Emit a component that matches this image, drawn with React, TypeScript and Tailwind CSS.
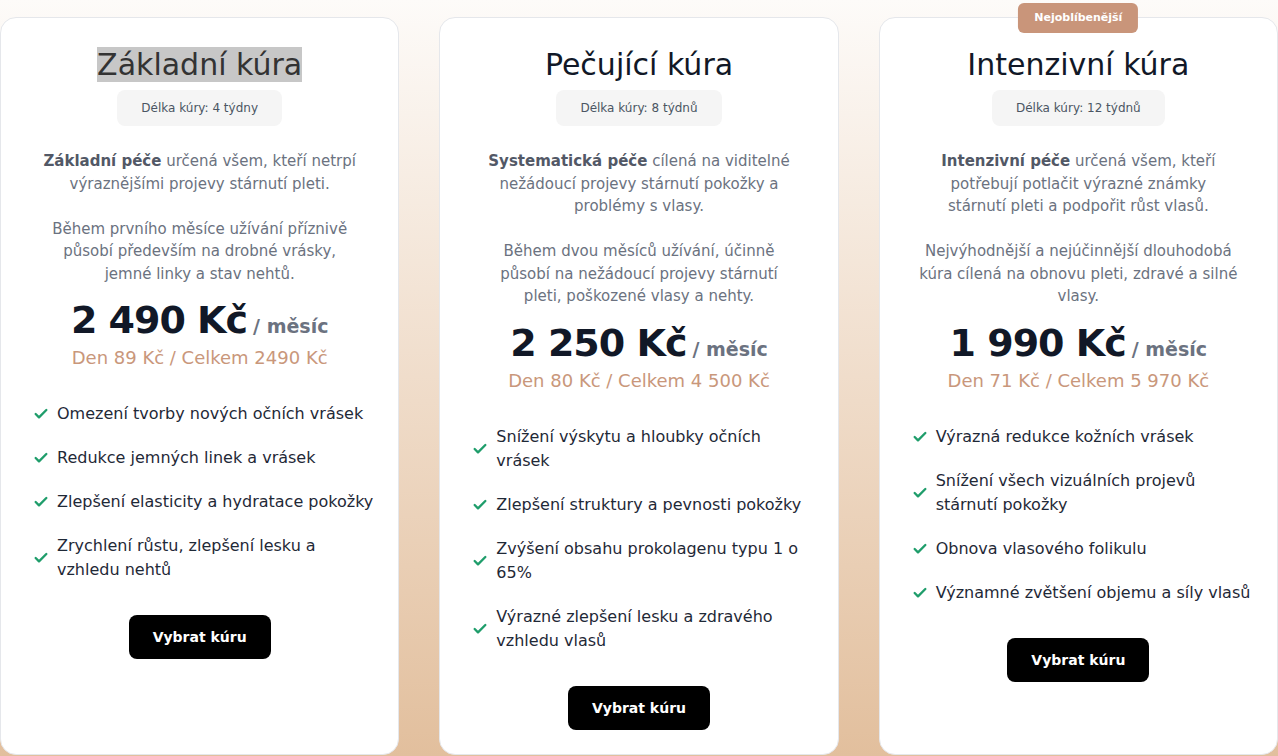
import { Check } from 'lucide-react';

type Plan = {
  title: string;
  duration: string;
  lead: string;
  intro: string[];
  body: string[];
  price: string;
  sub: string;
  features: string[][];
  badge?: string;
  selected?: boolean;
};

// line breaks follow the original layout
const plans: Plan[] = [
  {
    title: 'Základní kúra',
    duration: 'Délka kúry: 4 týdny',
    lead: 'Základní péče',
    intro: [' určená všem, kteří netrpí', 'výraznějšími projevy stárnutí pleti.'],
    body: ['Během prvního měsíce užívání příznivě', 'působí především na drobné vrásky,', 'jemné linky a stav nehtů.'],
    price: '2 490 Kč',
    sub: 'Den 89 Kč / Celkem 2490 Kč',
    features: [
      ['Omezení tvorby nových očních vrásek'],
      ['Redukce jemných linek a vrásek'],
      ['Zlepšení elasticity a hydratace pokožky'],
      ['Zrychlení růstu, zlepšení lesku a', 'vzhledu nehtů'],
    ],
    selected: true,
  },
  {
    title: 'Pečující kúra',
    duration: 'Délka kúry: 8 týdnů',
    lead: 'Systematická péče',
    intro: [' cílená na viditelné', 'nežádoucí projevy stárnutí pokožky a', 'problémy s vlasy.'],
    body: ['Během dvou měsíců užívání, účinně', 'působí na nežádoucí projevy stárnutí', 'pleti, poškozené vlasy a nehty.'],
    price: '2 250 Kč',
    sub: 'Den 80 Kč / Celkem 4 500 Kč',
    features: [
      ['Snížení výskytu a hloubky očních', 'vrásek'],
      ['Zlepšení struktury a pevnosti pokožky'],
      ['Zvýšení obsahu prokolagenu typu 1 o', '65%'],
      ['Výrazné zlepšení lesku a zdravého', 'vzhledu vlasů'],
    ],
  },
  {
    title: 'Intenzivní kúra',
    duration: 'Délka kúry: 12 týdnů',
    lead: 'Intenzivní péče',
    intro: [' určená všem, kteří', 'potřebují potlačit výrazné známky', 'stárnutí pleti a podpořit růst vlasů.'],
    body: ['Nejvýhodnější a nejúčinnější dlouhodobá', 'kúra cílená na obnovu pleti, zdravé a silné', 'vlasy.'],
    price: '1 990 Kč',
    sub: 'Den 71 Kč / Celkem 5 970 Kč',
    features: [
      ['Výrazná redukce kožních vrásek'],
      ['Snížení všech vizuálních projevů', 'stárnutí pokožky'],
      ['Obnova vlasového folikulu'],
      ['Významné zvětšení objemu a síly vlasů'],
    ],
    badge: 'Nejoblíbenější',
  },
];

const Lines = ({ lines }: { lines: string[] }) => (
  <>
    {lines.map((l, i) => (
      <span key={i}>
        {i > 0 && <br />}
        {l}
      </span>
    ))}
  </>
);

const PlanCard = ({ plan }: { plan: Plan }) => (
  <div className="relative flex flex-col items-center bg-white border border-[#e5e7eb] rounded-2xl px-8 pt-[29px] pb-6">
    {plan.badge && (
      <span className="absolute left-1/2 top-0 -translate-x-1/2 -translate-y-1/2 bg-[#c9957a] text-white text-[11px] font-semibold rounded-md px-4 h-[30px] flex items-center">
        {plan.badge}
      </span>
    )}
    <h2 className="text-[30px] leading-9 font-medium text-[#111827] text-center">
      {plan.selected ? (
        <span className="bg-[#c7c7c7] text-[#333333]">{plan.title}</span>
      ) : (
        plan.title
      )}
    </h2>
    <div className="mt-[7px] bg-[#f5f5f5] rounded-lg px-6 py-2.5 text-xs leading-4 text-[#4b5563]">
      {plan.duration}
    </div>
    <div className="mt-6 w-full text-center text-[15px] leading-[22.5px] text-[#6b7280] whitespace-nowrap">
      <p>
        <span className="font-semibold text-[#525866]">{plan.lead}</span>
        <Lines lines={plan.intro} />
      </p>
      <p className="mt-[22.5px]">
        <Lines lines={plan.body} />
      </p>
    </div>
    <div className="mt-[11px] h-12 flex items-baseline">
      <span className="text-[38px] leading-[48px] font-semibold tracking-[-1px] text-[#111827]">{plan.price}</span>
      <span className="ml-1.5 text-[19px] leading-none font-semibold text-[#6b7280]">/ měsíc</span>
    </div>
    <div className="text-lg leading-7 font-medium text-[#c9977b]">{plan.sub}</div>
    <ul className="mt-[30px] w-full flex flex-col gap-5">
      {plan.features.map((f) => (
        <li key={f[0]} className="flex items-center gap-2 text-base leading-6 text-[#1f2937] whitespace-nowrap">
          <Check className="w-4 h-4 shrink-0 text-[#1f9d6b]" strokeWidth={3.5} />
          <span>
            <Lines lines={f} />
          </span>
        </li>
      ))}
    </ul>
    <button className="mt-[33px] bg-black text-white text-sm font-semibold rounded-lg px-6 py-3 leading-5">
      Vybrat kúru
    </button>
  </div>
);

export default function App() {
  return (
    <div
      className="min-h-screen bg-gradient-to-b from-[#fdfbf9] to-[#e2bf9d] pt-[17px] overflow-hidden"
      style={{ fontFamily: '"DejaVu Sans", sans-serif' }}
    >
      <div className="grid grid-cols-3 gap-10 items-stretch">
        {plans.map((p) => (
          <PlanCard key={p.title} plan={p} />
        ))}
      </div>
    </div>
  );
}
